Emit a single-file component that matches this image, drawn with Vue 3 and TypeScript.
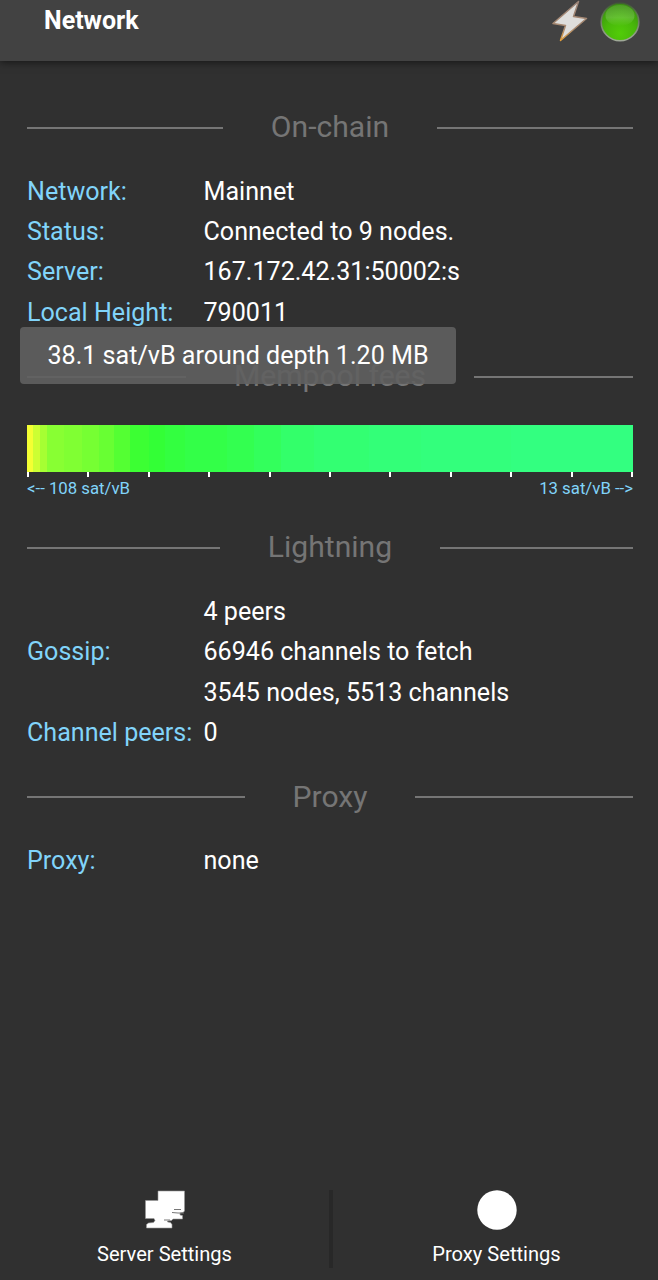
<script setup lang="ts">
interface Row { label: string; values: string[] }
interface Segment { to: number; color: string }

const chainRows: Row[] = [
  { label: 'Network:', values: ['Mainnet'] },
  { label: 'Status:', values: ['Connected to 9 nodes.'] },
  { label: 'Server:', values: ['167.172.42.31:50002:s'] },
  { label: 'Local Height:', values: ['790011'] },
]
const lightningRows: Row[] = [
  { label: 'Gossip:', values: ['4 peers', '66946 channels to fetch', '3545 nodes, 5513 channels'] },
  { label: 'Channel peers:', values: ['0'] },
]
const proxyRows: Row[] = [{ label: 'Proxy:', values: ['none'] }]

const segments: Segment[] = [
  { to: 6, color: '#f4ff33' },
  { to: 13, color: '#ccff33' },
  { to: 20, color: '#a6ff33' },
  { to: 37, color: '#88ff33' },
  { to: 55, color: '#80ff33' },
  { to: 72, color: '#76ff33' },
  { to: 87, color: '#68ff33' },
  { to: 103, color: '#54ff33' },
  { to: 122, color: '#3cff33' },
  { to: 138, color: '#33ff36' },
  { to: 158, color: '#33ff40' },
  { to: 200, color: '#33ff48' },
  { to: 227, color: '#33ff50' },
  { to: 254, color: '#33ff5c' },
  { to: 287, color: '#33ff6a' },
  { to: 342, color: '#33ff72' },
  { to: 394, color: '#33ff78' },
  { to: 484, color: '#33ff7c' },
  { to: 606, color: '#33ff80' },
]
const widthOf = (i: number): number => segments[i].to - (i ? segments[i - 1].to : 0)
</script>

<template>
  <div class="screen">
    <header class="bar">
      <h1>Network</h1>
      <svg class="bolt" viewBox="0 0 38 44">
        <defs>
          <linearGradient id="boltEdge" x1="0" y1="0" x2="0" y2="1">
            <stop offset="0" stop-color="#9b8478" />
            <stop offset=".7" stop-color="#a98a70" />
            <stop offset="1" stop-color="#e5a03a" />
          </linearGradient>
        </defs>
        <path d="M27.500 1.500 L2 23.500 L14.500 25.500 L9.500 40.500 L35.500 18.500 L22.500 16.500 Z" fill="#dededc" stroke="url(#boltEdge)" stroke-width="1.500" stroke-linejoin="round" />
      </svg>
      <svg class="led" viewBox="0 0 40 40">
        <defs>
          <radialGradient id="ledFill" cx=".5" cy=".8" r=".8">
            <stop offset="0" stop-color="#52cc08" />
            <stop offset=".5" stop-color="#48b80a" />
            <stop offset="1" stop-color="#3a8e10" />
          </radialGradient>
          <linearGradient id="ledShine" x1="0" y1="0" x2="0" y2="1">
            <stop offset="0" stop-color="#fff" stop-opacity=".1" />
            <stop offset=".6" stop-color="#fff" stop-opacity=".16" />
            <stop offset="1" stop-color="#fff" stop-opacity="0" />
          </linearGradient>
          <linearGradient id="ledRim" x1="0" y1="0" x2="0" y2="1">
            <stop offset="0" stop-color="#405e32" />
            <stop offset="1" stop-color="#a0aa98" />
          </linearGradient>
        </defs>
        <circle cx="20" cy="20" r="18.800" fill="url(#ledFill)" stroke="url(#ledRim)" stroke-width="1.600" />
        <ellipse cx="20" cy="13.500" rx="14.500" ry="10.500" fill="url(#ledShine)" />
      </svg>
    </header>

    <main>
      <h2><span>On-chain</span></h2>
      <dl v-for="r in chainRows" :key="r.label">
        <dt>{{ r.label }}</dt>
        <dd><div v-for="v in r.values" :key="v">{{ v }}</div></dd>
      </dl>

      <div class="mempool-heading">
        <h2><span>Mempool fees</span></h2>
        <div class="tooltip"><span>38.1 sat/vB around depth 1.20 MB</span></div>
      </div>
      <div class="histogram">
        <div class="segments">
          <i v-for="(s, i) in segments" :key="s.to" :style="{ flexGrow: widthOf(i), background: s.color }"></i>
        </div>
        <div class="ticks"><i v-for="n in 11" :key="n"></i></div>
        <div class="range"><span>&lt;-- 108 sat/vB</span><span>13 sat/vB --&gt;</span></div>
      </div>

      <h2><span>Lightning</span></h2>
      <dl v-for="r in lightningRows" :key="r.label">
        <dt>{{ r.label }}</dt>
        <dd><div v-for="v in r.values" :key="v">{{ v }}</div></dd>
      </dl>

      <h2><span>Proxy</span></h2>
      <dl v-for="r in proxyRows" :key="r.label">
        <dt>{{ r.label }}</dt>
        <dd><div v-for="v in r.values" :key="v">{{ v }}</div></dd>
      </dl>
    </main>

    <footer>
      <button type="button">
        <svg viewBox="0 0 42 42">
          <path d="M14 2h26.500v20l-1.500 1.500-3 .500v2l2.500.500v3.500H29l-1.500 1.500-4 .500v1l3 .500 1.500 2v3.500H2.500v-3.500l2-1.500 5-.500 1.500-2-1-2H1.500v-18H14z" fill="#fff" stroke="#999" stroke-width=".6" />
          <path d="M30 20.500h7M28 23.500l6 .500h6M20 31h6" stroke="#777" stroke-width="1" fill="none" />
        </svg>
        <span>Server Settings</span>
      </button>
      <div class="divider"></div>
      <button type="button">
        <svg viewBox="0 0 42 42"><circle cx="21" cy="21" r="19.700" fill="#fff" /></svg>
        <span>Proxy Settings</span>
      </button>
    </footer>
  </div>
</template>

<style>
body { margin: 0; background: #303030; }
</style>

<style scoped>
.screen {
  height: 1280px;
  display: flex;
  flex-direction: column;
  overflow: hidden;
  background: #303030;
  color: #fff;
  font-family: Roboto, "Liberation Sans", sans-serif;
  font-size: 25.100px;
}
.bar {
  height: 61px;
  box-sizing: border-box;
  padding: 0 18px 0 44px;
  display: flex;
  align-items: flex-start;
  background: #424242;
  box-shadow: 0 1px 8px rgba(0, 0, 0, .6);
}
h1 { flex: 1; margin: 0; font-size: 25px; font-weight: 700; line-height: 42px; }
.bolt { width: 38px; height: 44px; margin-right: 11px; }
.led { width: 40px; height: 40px; margin-top: 2px; }
main { flex: 1; padding: 22.500px 25px 0 27px; }
h2 {
  display: flex;
  align-items: center;
  gap: 48px;
  height: 88px;
  box-sizing: border-box;
  padding-bottom: 2px;
  margin: 0;
  color: #757575;
  font-size: 30.100px;
  font-weight: 400;
}
h2::before, h2::after { content: ""; flex: 1; height: 2px; margin-top: 2px; background: #757575; }
dl { display: flex; align-items: center; margin: 0; line-height: 40.35px; }
dt { width: 176.500px; color: #81d4fa; white-space: nowrap; }
dd { margin: 0; white-space: nowrap; }
.mempool-heading { position: relative; }
.tooltip {
  position: absolute;
  left: -7px;
  top: -5.500px;
  width: 436px;
  height: 57px;
  line-height: 57px;
  text-align: center;
  white-space: nowrap;
  border-radius: 4px;
  background: rgba(97, 97, 97, .9);
}
.histogram { height: 83px; padding-top: 4px; box-sizing: border-box; }
.segments { display: flex; height: 47px; }
.segments i { flex: 0 0 0; }
.ticks { display: flex; justify-content: space-between; }
.ticks i { width: 2px; height: 5px; background: #fff; }
.range { display: flex; justify-content: space-between; color: #81d4fa; font-size: 16.750px; line-height: 23px; }
footer { display: grid; grid-template-columns: 329px 4px 327px; height: 96px; }
button {
  display: flex;
  flex-direction: column;
  align-items: center;
  padding: 5px 0 0;
  border: 0;
  background: none;
  color: #fff;
  font: 20.100px Roboto, "Liberation Sans", sans-serif;
}
button svg { width: 42px; height: 42px; }
button span { line-height: 24px; margin-top: 11px; }
.divider { height: 78px; margin-top: 6px; background: #282828; }
</style>
